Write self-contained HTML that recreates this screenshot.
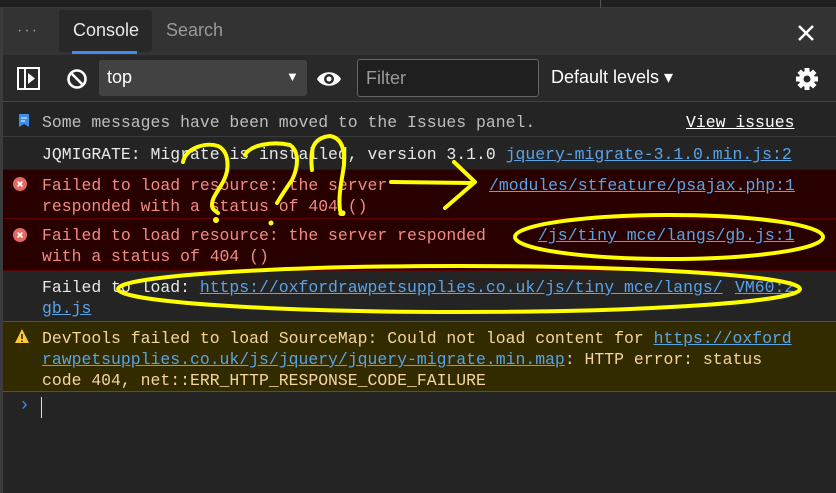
<!DOCTYPE html>
<html><head><meta charset="utf-8"><style>
*{margin:0;padding:0;box-sizing:border-box}
body{width:836px;height:493px;background:#242424;overflow:hidden;position:relative;font-family:"Liberation Sans",sans-serif;}
.mono{font-family:"Liberation Mono",monospace;font-size:16.45px;line-height:21px;}
.abs{position:absolute}
a{color:#5aa3e6;text-decoration:underline}
.row{position:absolute;left:3px;right:0;padding-left:39px;white-space:nowrap}
</style></head><body>
<div class="abs" style="left:0;top:0;width:836px;height:8px;background:#1f1f1f;border-bottom:1px solid #3a3a3a"></div>
<div class="abs" style="left:600px;top:0;width:1px;height:8px;background:#555"></div>
<div class="abs" style="left:0;top:8px;width:3px;height:485px;background:#3c3c3c"></div>
<div class="abs" style="left:3px;top:8px;width:833px;height:47px;background:#333"></div>
<div class="abs" style="left:17px;top:22px;color:#9a9a9a;font-size:16px;letter-spacing:2px">···</div>
<div class="abs" style="left:59px;top:10px;width:93px;height:42px;background:#282828;border-radius:3px"></div>
<div class="abs" style="left:73px;top:20px;color:#e8e8e8;font-size:18px">Console</div>
<div class="abs" style="left:72px;top:51px;width:65px;height:3px;background:#3b8eea"></div>
<div class="abs" style="left:166px;top:20px;color:#9a9a9a;font-size:18px">Search</div>
<svg class="abs" style="left:797px;top:24px" width="18" height="18"><path d="M2 2L16 16M16 2L2 16" stroke="#fff" stroke-width="2.5"/></svg>
<div class="abs" style="left:3px;top:55px;width:833px;height:47px;background:#292929;border-bottom:1px solid #444"></div>
<svg class="abs" style="left:17px;top:67px" width="24" height="24"><rect x="1" y="1" width="21" height="21" fill="none" stroke="#fff" stroke-width="2"/><path d="M8 1V22" stroke="#fff" stroke-width="2"/><path d="M11 6L18 11.5L11 17Z" fill="#fff"/></svg>
<svg class="abs" style="left:66px;top:68px" width="22" height="22"><circle cx="11" cy="11" r="8.5" fill="none" stroke="#fff" stroke-width="2.6"/><path d="M5 5L17 17" stroke="#fff" stroke-width="2.6"/></svg>
<div class="abs" style="left:99px;top:60px;width:208px;height:36px;background:#424242;border-radius:3px"></div>
<div class="abs" style="left:107px;top:67px;color:#fff;font-size:18px">top</div>
<div class="abs" style="left:286px;top:69px;color:#fff;font-size:13px">▼</div>
<svg class="abs" style="left:316px;top:67px" width="26" height="24"><path d="M1 12C6 3 20 3 25 12C20 21 6 21 1 12Z" fill="#fff"/><circle cx="13" cy="12" r="5" fill="#292929"/><circle cx="13" cy="12" r="2.5" fill="#fff"/></svg>
<div class="abs" style="left:357px;top:59px;width:182px;height:38px;background:#1f1f1f;border:1px solid #666;border-radius:3px"></div>
<div class="abs" style="left:366px;top:68px;color:#9a9a9a;font-size:18px">Filter</div>
<div class="abs" style="left:551px;top:67px;color:#fff;font-size:18px">Default levels ▾</div>
<svg class="abs" style="left:795px;top:67px" width="24" height="24"><g fill="#fff"><circle cx="12" cy="12" r="8"/><rect x="9.5" y="1" width="5" height="22"/><rect x="1" y="9.5" width="22" height="5"/><rect x="9.5" y="1" width="5" height="22" transform="rotate(45 12 12)"/><rect x="9.5" y="1" width="5" height="22" transform="rotate(-45 12 12)"/></g><circle cx="12" cy="12" r="3.5" fill="#292929"/></svg>
<div class="row mono" style="top:103px;height:34px;padding-top:9px;color:#bdbdbd;border-bottom:1px solid #3a3a3a">Some messages have been moved to the Issues panel.<span style="position:absolute;left:683px;color:#fff;text-decoration:underline">View issues</span></div>
<svg class="abs" style="left:18px;top:113px" width="12" height="16"><path d="M1 1H11V14L6 11L1 14Z" fill="#3b8eea"/><path d="M3 5H9M3 8H7" stroke="#fff" stroke-width="1"/></svg>
<div class="row mono" style="top:138px;height:31px;padding-top:6px;color:#e8e8e8">JQMIGRATE: Migrate is installed, version 3.1.0 <a>jquery-migrate-3.1.0.min.js:2</a></div>
<div class="row mono" style="top:169px;height:50px;padding-top:5px;background:#290000;border-top:1px solid #5c0000;border-bottom:1px solid #5c0000;color:#f28b82">Failed to load resource: the server<br>responded with a status of 404 ()<a style="position:absolute;left:486px;top:5px">/modules/stfeature/psajax.php:1</a></div>
<div class="row mono" style="top:219px;height:52px;padding-top:6px;background:#290000;border-bottom:1px solid #5c0000;color:#f28b82">Failed to load resource: the server responded<br>with a status of 404 ()<a style="position:absolute;left:535px;top:6px">/js/tiny_mce/langs/gb.js:1</a></div>
<svg class="abs" style="left:13px;top:177px" width="14" height="14"><circle cx="7" cy="7" r="7" fill="#e46962"/><path d="M4.5 4.5L9.5 9.5M9.5 4.5L4.5 9.5" stroke="#fff" stroke-width="1.6"/></svg>
<svg class="abs" style="left:13px;top:228px" width="14" height="14"><circle cx="7" cy="7" r="7" fill="#e46962"/><path d="M4.5 4.5L9.5 9.5M9.5 4.5L4.5 9.5" stroke="#fff" stroke-width="1.6"/></svg>
<div class="row mono" style="top:271px;height:50px;padding-top:6px;color:#e8e8e8">Failed to load: <a>https://oxfordrawpetsupplies.co.uk/js/tiny_mce/langs/</a><a style="position:absolute;left:732px">VM60:2</a><br><a>gb.js</a></div>
<div class="row mono" style="top:321px;height:71px;padding-top:6px;background:#332b00;border-top:1px solid #665500;border-bottom:1px solid #665500;color:#f4d59e">DevTools failed to load SourceMap: Could not load content for <a>https://oxford</a><br><a>rawpetsupplies.co.uk/js/jquery/jquery-migrate.min.map</a>: HTTP error: status<br>code 404, net::ERR_HTTP_RESPONSE_CODE_FAILURE</div>
<svg class="abs" style="left:14px;top:328px" width="16" height="16"><path d="M8 1L15 15H1Z" fill="#f9c93a"/><path d="M8 6V11M8 12.5V14" stroke="#332b00" stroke-width="1.6"/></svg>
<div class="abs" style="left:19px;top:396px;color:#3b8eea;font-size:18px;font-family:'Liberation Mono',monospace">›</div>
<div class="abs" style="left:41px;top:397px;width:1px;height:21px;background:#ddd"></div>
<svg class="abs" style="left:0;top:0" width="836" height="493"><g fill="none" stroke="#ffff00" stroke-width="4" stroke-linecap="round" stroke-linejoin="round">
<path d="M183 162C186 148 205 142 218 146C230 152 229 170 224 180C218 192 212 197 212 205C212 210 216 211 218 213"/>
<path d="M245 155C250 145 272 141 290 145C300 152 298 168 292 180C285 190 280 198 277 203"/>
<path d="M312 170C310 150 312 138 330 136C342 138 345 150 344 165C342 180 338 195 340 210C342 214 338 214 343 214"/>
<path d="M391 182L472 183"/><path d="M454 162L475 182L445 208"/>
<ellipse cx="669" cy="237" rx="154" ry="22"/>
<ellipse cx="459" cy="289" rx="341" ry="23"/>
</g><g fill="#ffff00"><circle cx="216" cy="220" r="3"/><circle cx="271" cy="223" r="2.5"/><circle cx="343" cy="213" r="2.5"/></g></svg>
</body></html>
